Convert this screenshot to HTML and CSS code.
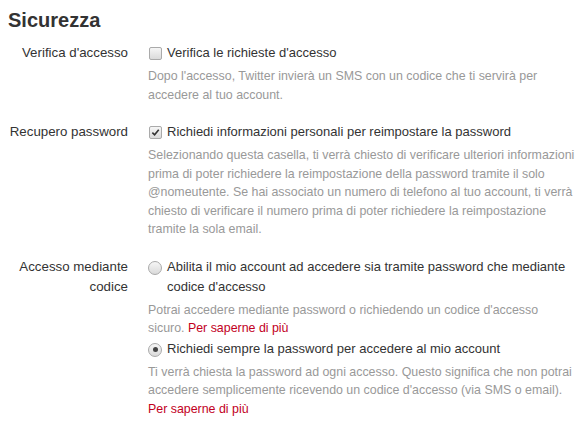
FILE: index.html
```
<!DOCTYPE html>
<html lang="it">
<head>
<meta charset="utf-8">
<link rel="stylesheet" href="styles.css">
</head>
<body>
<h2 class="title">Sicurezza</h2>
<div class="row">
  <div class="label">Verifica d'accesso</div>
  <div class="controls">
    <div class="option"><span class="box checkbox"></span><span class="opt-text">Verifica le richieste d'accesso</span></div>
    <p class="help">Dopo l'accesso, Twitter invierà un SMS con un codice che ti servirà per accedere al tuo account.</p>
  </div>
</div>
<div class="row">
  <div class="label">Recupero password</div>
  <div class="controls">
    <div class="option"><span class="box checkbox"><svg viewBox="0 0 10 10" width="9" height="9"><path d="M1.5 5.2 L4 7.6 L8.6 2" fill="none" stroke="#333" stroke-width="1.8"/></svg></span><span class="opt-text">Richiedi informazioni personali per reimpostare la password</span></div>
    <p class="help">Selezionando questa casella, ti verrà chiesto di verificare ulteriori informazioni prima di poter richiedere la reimpostazione della password tramite il solo @nomeutente. Se hai associato un numero di telefono al tuo account, ti verrà chiesto di verificare il numero prima di poter richiedere la reimpostazione tramite la sola email.</p>
  </div>
</div>
<div class="row">
  <div class="label">Accesso mediante codice</div>
  <div class="controls">
    <div class="option"><span class="box radio"></span><span class="opt-text">Abilita il mio account ad accedere sia tramite password che mediante codice d'accesso</span></div>
    <p class="help">Potrai accedere mediante password o richiedendo un codice d'accesso sicuro. <a class="link" href="#">Per saperne di più</a></p>
    <div class="option second"><span class="box radio selected"></span><span class="opt-text">Richiedi sempre la password per accedere al mio account</span></div>
    <p class="help">Ti verrà chiesta la password ad ogni accesso. Questo significa che non potrai accedere semplicemente ricevendo un codice d'accesso (via SMS o email). <a class="link" href="#">Per saperne di più</a></p>
  </div>
</div>
</body>
</html>
```
FILE: styles.css
```
body {
  margin: 8px 5px 8px 8px;
  background: #fff;
  font-family: "Liberation Sans", Arial, sans-serif;
  color: #333;
}
.title {
  margin: 0 0 11px;
  font-size: 20px;
  line-height: 24px;
  font-weight: bold;
  color: #333;
}
.row {
  display: grid;
  grid-template-columns: 120px 1fr;
  column-gap: 20px;
  margin-bottom: 18px;
}
.label {
  text-align: right;
  font-size: 13.3px;
  line-height: 20px;
}
.option {
  display: flex;
  align-items: flex-start;
  gap: 5px;
  font-size: 13px;
  line-height: 20px;
}
.option.second {
  margin-top: 1px;
}
.box {
  flex: none;
  width: 11px;
  height: 11px;
  margin-top: 4px;
  margin-left: 1px;
  border: 1px solid #aaa;
  background: linear-gradient(#f6f6f6, #dadada);
  display: flex;
  align-items: center;
  justify-content: center;
}
.checkbox {
  border-radius: 2px;
}
.radio {
  border-radius: 50%;
  width: 12px;
  height: 12px;
  margin-left: 0;
}
.radio.selected::after {
  content: "";
  width: 5px;
  height: 5px;
  border-radius: 50%;
  background: #444;
}
.help {
  margin: 4px 0 0;
  font-size: 12.4px;
  line-height: 18.5px;
  color: #999;
}
.link {
  color: #c2001e;
  text-decoration: none;
}
```
